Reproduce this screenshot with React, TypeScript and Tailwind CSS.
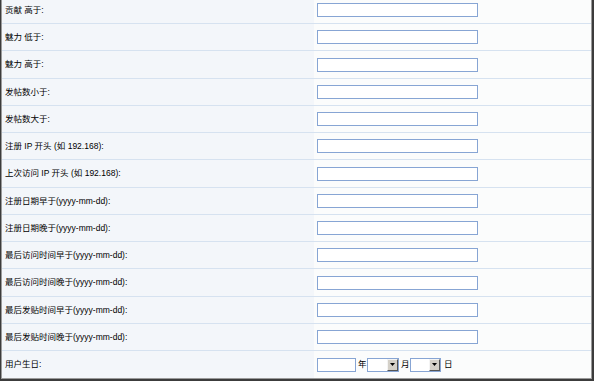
import React from "react";

const rows: { label: string; h: string }[] = [
  { label: "贡献 高于:", h: "h-[27px]" },
  { label: "魅力 低于:", h: "h-[27px]" },
  { label: "魅力 高于:", h: "h-[28px]" },
  { label: "发帖数小于:", h: "h-[27px]" },
  { label: "发帖数大于:", h: "h-[27px]" },
  { label: "注册 IP 开头 (如 192.168):", h: "h-[27px]" },
  { label: "上次访问 IP 开头 (如 192.168):", h: "h-[28px]" },
  { label: "注册日期早于(yyyy-mm-dd):", h: "h-[27px]" },
  { label: "注册日期晚于(yyyy-mm-dd):", h: "h-[27px]" },
  { label: "最后访问时间早于(yyyy-mm-dd):", h: "h-[27px]" },
  { label: "最后访问时间晚于(yyyy-mm-dd):", h: "h-[28px]" },
  { label: "最后发贴时间早于(yyyy-mm-dd):", h: "h-[27px]" },
  { label: "最后发贴时间晚于(yyyy-mm-dd):", h: "h-[27px]" },
];

function Select({ w }: { w: string }) {
  return (
    <div className={`flex h-[14px] ${w} border border-[#87a5d4] bg-white`}>
      <div className="ml-auto flex h-full w-[11px] items-center justify-center border border-t-[#f4f4f4] border-l-[#f4f4f4] border-r-[#555] border-b-[#555] bg-[#d4d0c8]">
        <svg width="5" height="3" viewBox="0 0 5 3">
          <path d="M0 0h5L2.5 3z" fill="#000" />
        </svg>
      </div>
    </div>
  );
}

export default function App() {
  return (
    <div
      className="h-[381px] w-[594px] overflow-hidden border-b-2 border-l border-r-2 border-[#3c3c3c] bg-white text-[8.5px] text-black"
      style={{ fontFamily: '"Liberation Sans", "Noto Sans CJK SC", sans-serif' }}
    >
      <div className="flex h-full flex-col overflow-hidden border-b border-l border-r border-[#9a9a9a]">
        <div className="-mt-[3px] flex flex-1 flex-col">
          {rows.map((r) => (
            <div key={r.label} className={`flex ${r.h} border-b border-[#d6e2f0]`}>
              <div className="flex w-[312px] items-center bg-[#f3f6fa] pl-[3px]">{r.label}</div>
              <div className="flex flex-1 items-center bg-[#fbfcfc] pl-[3px]">
                <div className="h-[14px] w-[161px] border border-[#87a5d4] bg-white" />
              </div>
            </div>
          ))}
          <div className="flex flex-1">
            <div className="flex w-[312px] items-center bg-[#f3f6fa] pl-[3px]">用户生日:</div>
            <div className="flex flex-1 items-center bg-[#fbfcfc] pl-[3px]">
              <div className="h-[14px] w-[39px] border border-[#87a5d4] bg-white" />
              <span className="ml-[2px] w-[9px]">年</span>
              <Select w="w-[32px]" />
              <span className="ml-[2px] w-[9px]">月</span>
              <Select w="w-[31px]" />
              <span className="ml-[3px]">日</span>
            </div>
          </div>
        </div>
      </div>
    </div>
  );
}
